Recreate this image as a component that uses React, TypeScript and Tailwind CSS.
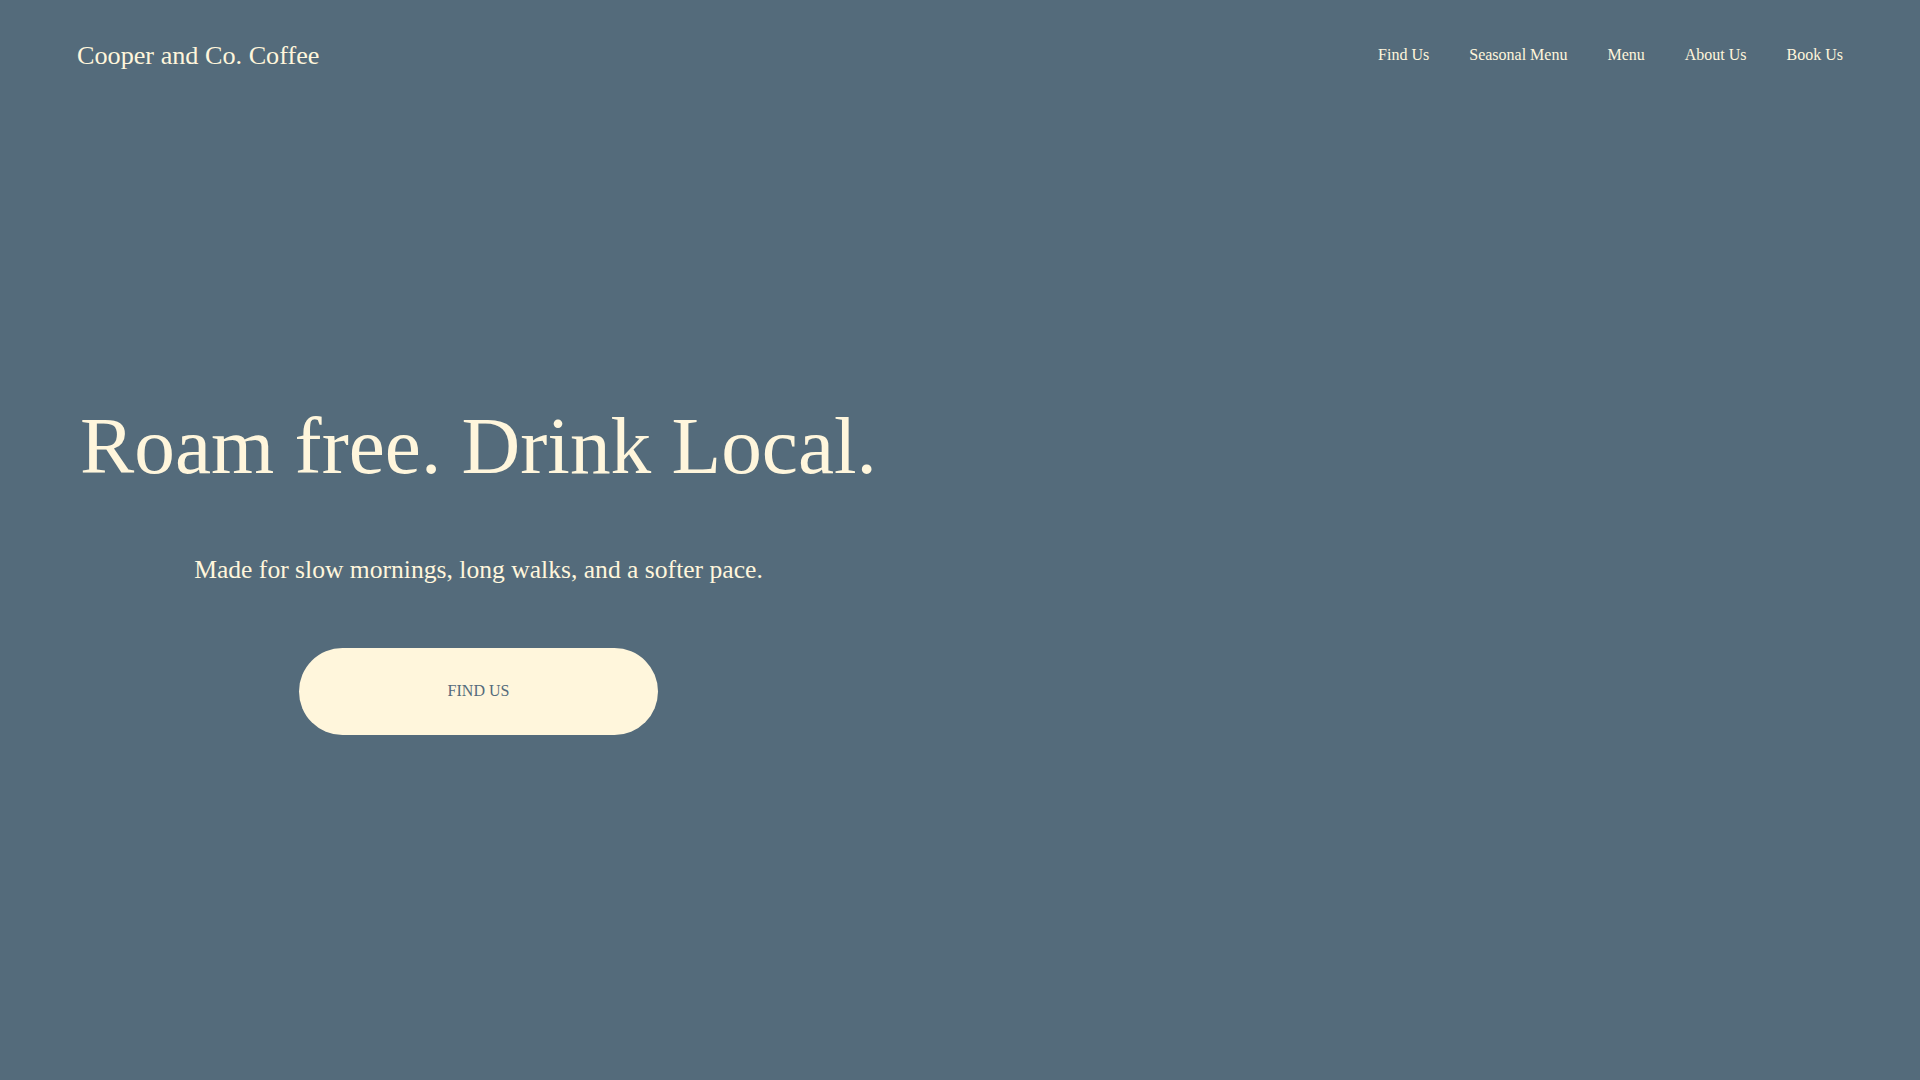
const navLinks = ["Find Us", "Seasonal Menu", "Menu", "About Us", "Book Us"];

const App: React.FC = () => {
  return (
    <div className="min-h-screen bg-[#546b7b] text-[#fff6dc] font-['Liberation_Serif','Times_New_Roman',serif]">
      <header className="flex items-center justify-between px-[77px] h-[110px]">
        <a href="#" className="mt-[2px] text-[26.2px] leading-none">
          Cooper and Co. Coffee
        </a>
        <nav className="flex items-center gap-10 text-base">
          {navLinks.map((link) => (
            <a key={link} href="#" className="hover:underline">
              {link}
            </a>
          ))}
        </nav>
      </header>

      <main className="grid grid-cols-2">
        <section className="flex flex-col items-center text-center pt-[296px] pr-[3px]">
          <h1 className="text-[81.3px] leading-none">Roam free. Drink Local.</h1>
          <p className="mt-[64px] text-[25.6px] leading-[1.5]">
            Made for slow mornings, long walks, and a softer pace.
          </p>
          <button
            type="button"
            className="mt-[58px] w-[359px] h-[87px] rounded-full bg-[#fff6dc] text-[#546b7b] text-base uppercase"
          >
            Find Us
          </button>
        </section>
        <div />
      </main>
    </div>
  );
};

export default App;
